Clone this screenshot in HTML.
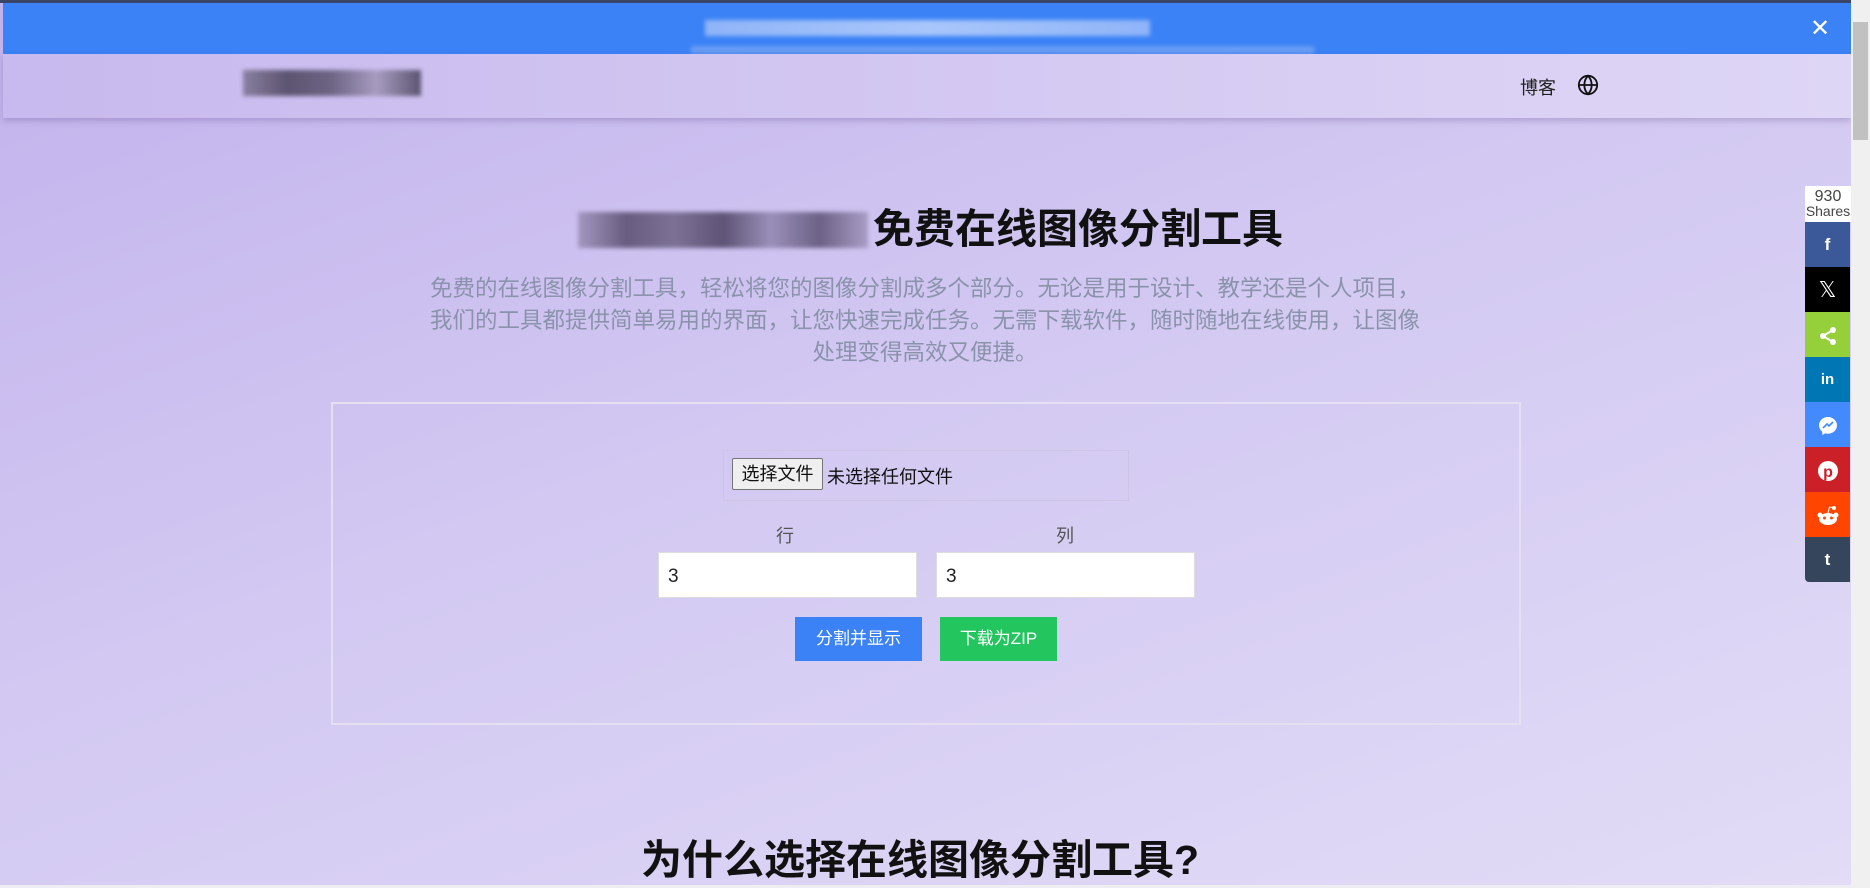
<!DOCTYPE html>
<html><head><meta charset="utf-8"><style>
*{margin:0;padding:0;box-sizing:border-box}
body{width:1870px;height:888px;overflow:hidden;position:relative;font-family:"Liberation Sans","Noto Sans CJK SC",sans-serif;background:linear-gradient(160deg,#c2b2ec 0%,#d2c8f2 45%,#e2dcf6 100%)}
.abs{position:absolute}
.banner{left:3px;top:3px;width:1848px;height:51px;background:#3b82f6}
.blur{filter:blur(2px)}
.header{left:3px;top:54px;width:1848px;height:64px;background:linear-gradient(90deg,#c8b9ee,#ded6f5);box-shadow:0 3px 6px rgba(80,60,120,.25)}
.scroll{left:1851px;top:0;width:19px;height:888px;background:#f0f0f0}
.thumb{left:1853px;top:22px;width:15px;height:118px;background:#c1c1c1}
h1{position:absolute;left:873px;top:204px;font-size:41px;font-weight:bold;color:#111;white-space:nowrap;line-height:50px}
.sub{left:420px;top:273px;width:1010px;text-align:center;font-size:22.5px;line-height:32px;color:#8a93ab}
.box{left:331px;top:402px;width:1190px;height:323px;border:2px solid #e4e0f0}
.file{left:723px;top:450px;width:406px;height:51px;border:1px solid #cdc4e6}
.lab{font-size:18px;color:#555;}
.inp{background:#fff;border:1px solid #ddd;height:46px;width:259px;font-size:19px;padding:13px 0 0 9px;color:#222}
.btn{color:#fff;font-size:17px;text-align:center}
.share{left:1805px;width:45px;height:45px;color:#fff;text-align:center;line-height:45px;font-weight:bold;font-size:17px}
h2{position:absolute;left:0;width:1840px;text-align:center;top:834px;font-size:41px;font-weight:bold;color:#111;line-height:52px}
</style></head><body>
<div class="abs" style="left:0;top:0;width:1870px;height:3px;background:#3a4568"></div>
<div class="abs banner"></div>
<div class="abs blur" style="left:705px;top:20px;width:445px;height:16px;background:linear-gradient(90deg,#8fb4f8,#a9c6fb,#8fb4f8)"></div>
<div class="abs blur" style="left:690px;top:46px;width:625px;height:8px;background:#6a9cf3;border-radius:4px"></div>
<div class="abs" style="left:1810px;top:14px;color:#fff;font-size:24px">✕</div>
<div class="abs header"></div>
<div class="abs blur" style="left:243px;top:70px;width:178px;height:26px;background:linear-gradient(90deg,#8a7fa0,#5c5470,#6e6585,#a79cc0,#5c5470)"></div>
<div class="abs" style="left:1520px;top:74px;font-size:18px;color:#222">博客</div>
<svg class="abs" style="left:1577px;top:74px" width="22" height="22" viewBox="0 0 24 24" fill="none" stroke="#111" stroke-width="2"><circle cx="12" cy="12" r="10"/><path d="M2 12h20M12 2c3 3 4 6.5 4 10s-1 7-4 10c-3-3-4-6.5-4-10s1-7 4-10z"/></svg>
<div class="abs blur" style="left:578px;top:212px;width:290px;height:36px;background:linear-gradient(90deg,#a397c0,#685d80,#7d7296,#5e5476,#9a8fb8,#6c6186,#a89dc4)"></div>
<h1>免费在线图像分割工具</h1>
<div class="abs sub">免费的在线图像分割工具，轻松将您的图像分割成多个部分。无论是用于设计、教学还是个人项目，我们的工具都提供简单易用的界面，让您快速完成任务。无需下载软件，随时随地在线使用，让图像处理变得高效又便捷。</div>
<div class="abs box"></div>
<div class="abs file"></div>
<div class="abs" style="left:732px;top:458px;width:91px;height:32px;background:#efefef;border:1px solid #767676;border-radius:2px;font-size:18px;line-height:30px;text-align:center;color:#111">选择文件</div>
<div class="abs" style="left:827px;top:463px;font-size:18px;color:#111">未选择任何文件</div>
<div class="abs lab" style="left:776px;top:522px">行</div>
<div class="abs lab" style="left:1056px;top:522px">列</div>
<div class="abs inp" style="left:658px;top:552px">3</div>
<div class="abs inp" style="left:936px;top:552px">3</div>
<div class="abs btn" style="left:795px;top:617px;width:127px;height:44px;line-height:44px;background:#3b82f6">分割并显示</div>
<div class="abs btn" style="left:940px;top:617px;width:117px;height:44px;line-height:44px;background:#22c55e">下载为ZIP</div>
<h2>为什么选择在线图像分割工具?</h2>
<div class="abs" style="left:0;top:885px;width:1851px;height:3px;background:#eeeef2"></div>
<div class="abs" style="left:1805px;top:186px;width:46px;height:36px;background:#fff;text-align:center;font-size:16px;line-height:15px;color:#444;padding-top:3px">930<br><span style="font-size:14px">Shares</span></div>
<div class="abs share" style="top:222px;background:#3b5998">f</div>
<div class="abs share" style="top:267px;background:#000;font-weight:normal;font-size:22px">𝕏</div>
<div class="abs share" style="top:312px;background:#95d03a"><svg width="20" height="20" viewBox="0 0 20 20" style="vertical-align:middle" fill="#fff"><circle cx="15" cy="4" r="3"/><circle cx="5" cy="10" r="3"/><circle cx="15" cy="16" r="3"/><path d="M15 4L5 10L15 16" stroke="#fff" stroke-width="2" fill="none"/></svg></div>
<div class="abs share" style="top:357px;background:#0077b5;font-size:15px">in</div>
<div class="abs share" style="top:402px;background:#448aff"><svg width="22" height="22" viewBox="0 0 22 22" style="vertical-align:middle"><path d="M11 2C6 2 2 5.7 2 10.3c0 2.6 1.3 4.9 3.3 6.4V20l3-1.7c.9.3 1.8.4 2.7.4 5 0 9-3.7 9-8.3S16 2 11 2z" fill="#fff"/><path d="M6 13l4-4 2 2 4-4-4 4-2-2z" stroke="#448aff" stroke-width="1.6" fill="none"/></svg></div>
<div class="abs share" style="top:447px;background:#cb2027"><svg width="22" height="22" viewBox="0 0 22 22" style="vertical-align:middle"><circle cx="11" cy="11" r="10" fill="#fff"/><text x="11" y="17" text-anchor="middle" font-size="16" font-weight="bold" fill="#cb2027" font-family="Liberation Sans">p</text></svg></div>
<div class="abs share" style="top:492px;background:#ff4500"><svg width="24" height="22" viewBox="0 0 24 22" style="vertical-align:middle"><ellipse cx="12" cy="14" rx="9" ry="6" fill="#fff"/><circle cx="4" cy="10" r="2.5" fill="#fff"/><circle cx="20" cy="10" r="2.5" fill="#fff"/><circle cx="18" cy="3" r="2" fill="#fff"/><path d="M12 8l1.5-6 4.5 1" stroke="#fff" fill="none"/><circle cx="8.5" cy="13" r="1.5" fill="#ff4500"/><circle cx="15.5" cy="13" r="1.5" fill="#ff4500"/></svg></div>
<div class="abs share" style="top:537px;background:#35465c;border-radius:0 0 0 4px">t</div>
<div class="abs scroll"></div>
<div class="abs thumb"></div>
</body></html>
